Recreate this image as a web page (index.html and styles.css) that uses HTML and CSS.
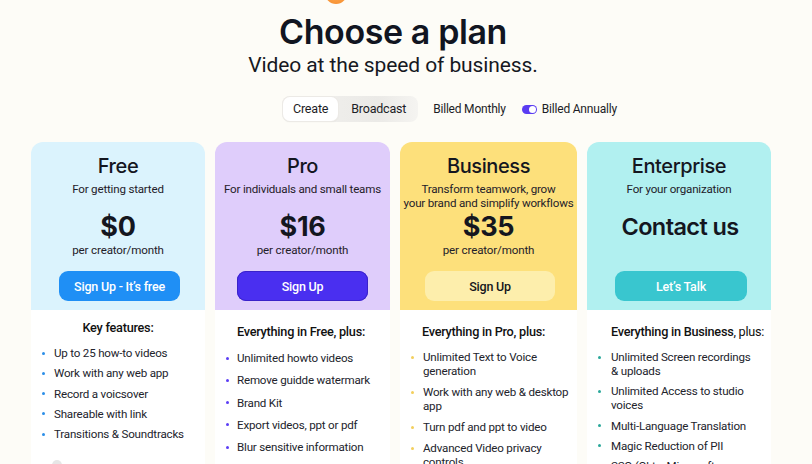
FILE: index.html
```html
<!DOCTYPE html>
<html lang="en">
<head>
<meta charset="utf-8">
<title>Choose a plan</title>
<link rel="stylesheet" href="styles.css">
</head>
<body>
<div class="page">
  <div class="peek"></div>
  <header class="hero">
    <h1 class="hero-title">Choose a plan</h1>
    <p class="hero-sub">Video at the speed of business.</p>
  </header>
  <div class="controls">
    <div class="seg">
      <span class="seg-item seg-on">Create</span>
      <span class="seg-item">Broadcast</span>
    </div>
    <span class="bill">Billed Monthly</span>
    <span class="switch"><span class="knob"></span></span>
    <span class="bill bill-on">Billed Annually</span>
  </div>

  <div class="plans">
    <section class="card card-free">
      <div class="card-top">
        <h2 class="plan-name">Free</h2>
        <p class="plan-desc">For getting started</p>
        <div class="price">$0</div>
        <div class="per">per creator/month</div>
        <button class="cta">Sign Up - It’s free</button>
      </div>
      <div class="card-body">
        <h3 class="feat-head center">Key features:</h3>
        <ul class="feats">
          <li>Up to 25 how-to videos</li>
          <li>Work with any web app</li>
          <li>Record a voicsover</li>
          <li>Shareable with link</li>
          <li>Transitions &amp; Soundtracks</li>
        </ul>
        <span class="more-dot"></span>
      </div>
    </section>

    <section class="card card-pro">
      <div class="card-top">
        <h2 class="plan-name">Pro</h2>
        <p class="plan-desc">For individuals and small teams</p>
        <div class="price">$16</div>
        <div class="per">per creator/month</div>
        <button class="cta">Sign Up</button>
      </div>
      <div class="card-body">
        <h3 class="feat-head">Everything in Free, plus:</h3>
        <ul class="feats">
          <li>Unlimited howto videos</li>
          <li>Remove guidde watermark</li>
          <li>Brand Kit</li>
          <li>Export videos, ppt or pdf</li>
          <li>Blur sensitive information</li>
        </ul>
      </div>
    </section>

    <section class="card card-biz">
      <div class="card-top">
        <h2 class="plan-name">Business</h2>
        <p class="plan-desc">Transform teamwork, grow<br>your brand and simplify workflows</p>
        <div class="price">$35</div>
        <div class="per">per creator/month</div>
        <button class="cta">Sign Up</button>
      </div>
      <div class="card-body">
        <h3 class="feat-head">Everything in Pro, plus:</h3>
        <ul class="feats">
          <li>Unlimited Text to Voice generation</li>
          <li>Work with any web &amp; desktop app</li>
          <li>Turn pdf and ppt to video</li>
          <li>Advanced Video privacy controls</li>
        </ul>
      </div>
    </section>

    <section class="card card-ent">
      <div class="card-top">
        <h2 class="plan-name">Enterprise</h2>
        <p class="plan-desc">For your organization</p>
        <div class="price price-contact">Contact us</div>
        <div class="per">&nbsp;</div>
        <button class="cta">Let’s Talk</button>
      </div>
      <div class="card-body">
        <h3 class="feat-head"><b>Everything in Business</b>, plus:</h3>
        <ul class="feats">
          <li>Unlimited Screen recordings &amp; uploads</li>
          <li>Unlimited Access to studio voices</li>
          <li>Multi-Language Translation</li>
          <li>Magic Reduction of PII</li>
          <li>SSO (Okta, Microsoft, Google)</li>
        </ul>
      </div>
    </section>
  </div>
</div>
</body>
</html>
```

FILE: styles.css
```css
* { box-sizing: border-box; }
html, body { margin: 0; padding: 0; }
body {
  background: #fdfcf7;
  font-family: Roboto, "Noto Sans", sans-serif;
  color: #14161f;
  overflow: hidden;
}
.page { width: 812px; height: 464px; overflow: hidden; }

.peek {
  width: 22px; height: 22px; border-radius: 50%;
  background: radial-gradient(circle at 50% 40%, #ffb25a, #f58a2c);
  margin: -18px 0 0 325px;
}

.hero { text-align: center; padding-right: 26px; }
.hero-title {
  margin: 8px 0 0;
  font-family: Inter, Roboto, sans-serif;
  font-size: 34px; line-height: 40px; font-weight: 600;
  letter-spacing: -0.4px;
  color: #111521;
}
.hero-sub {
  margin: 0;
  font-size: 21px; line-height: 26px; font-weight: 400;
  letter-spacing: -0.1px;
  color: #161822;
}

.controls {
  display: flex; align-items: center;
  margin-top: 18px; padding-left: 282px;
  font-size: 12px; letter-spacing: -0.2px; color: #1c1d26;
}
.seg {
  display: flex; align-items: center;
  height: 26px; padding: 1px;
  border-radius: 8px;
  background: linear-gradient(90deg, #f3f2ef, #ebeae7 70%, #f5f4f1);
}
.seg-item { padding: 0 11px 0 13px; line-height: 24px; font-size: 12.5px; }
.seg-on {
  background: #fff; border-radius: 7px; padding: 0 10px;
  box-shadow: 0 0 0 1px #eceae6, 0 1px 2px rgba(0,0,0,.06);
}
.bill { margin-left: 15px; }
.switch {
  margin-left: 16px; width: 15px; height: 9px; border-radius: 5px;
  background: #5a3cf2; display: flex; align-items: center; justify-content: flex-end;
  padding-right: 1px;
}
.knob { width: 7px; height: 7px; border-radius: 50%; background: #fff; }
.bill-on { margin-left: 5px; }

.plans {
  display: grid;
  grid-template-columns: 174px 175px 177px 184px;
  column-gap: 10px;
  margin: 20px 0 0 31px;
}
.card { display: flex; flex-direction: column; }
.card-top {
  height: 168px;
  border-radius: 12px 12px 0 0;
  padding-top: 12px;
  text-align: center;
  display: flex; flex-direction: column; align-items: center;
}
.card-free .card-top { background: #dbf3fd; }
.card-pro .card-top { background: #dfcdfb; }
.card-biz .card-top { background: #fde07b; }
.card-ent .card-top { background: #b1f0f0; }

.plan-name {
  margin: 0;
  font-family: Inter, Roboto, sans-serif;
  font-size: 20px; line-height: 24px; font-weight: 500;
  letter-spacing: -0.4px;
}
.plan-desc {
  margin: 4px 0 0; height: 28px;
  font-size: 11.6px; line-height: 14px; letter-spacing: -0.2px;
  color: #1f2029;
}
.card-biz .plan-desc { white-space: nowrap; }
.price {
  margin-top: 1px;
  font-family: Inter, Roboto, sans-serif;
  font-size: 27px; line-height: 32px; font-weight: 700;
  letter-spacing: -0.3px;
}
.price-contact { font-size: 23.5px; font-weight: 600; letter-spacing: -0.6px; margin-left: 2px; }
.per { font-size: 11.6px; line-height: 14px; letter-spacing: -0.15px; color: #1f2029; }
.cta {
  margin-top: 14px; height: 30px;
  border: 0; border-radius: 9px;
  font-family: inherit; font-size: 12.5px; font-weight: 500;
  letter-spacing: -0.2px;
  color: #fff;
}
.card-free .cta { width: 121px; background: #1f8ff5; margin-left: 3px; }
.card-pro .cta { width: 131px; background: #4a2ff0; box-shadow: inset 0 0 0 1px #3a22c9; }
.card-biz .cta { width: 130px; background: #fdeeac; color: #15161c; margin-left: 3px; }
.card-ent .cta { width: 132px; background: #39c6cf; margin-left: 4px; }

.card-body {
  flex: 1;
  background: #fff;
  padding: 13px 0 0 12px;
  height: 200px;
  position: relative;
}
.card-free .card-body { padding-top: 9px; }
.feat-head {
  margin: 0 0 0 10px;
  font-size: 12.7px; line-height: 18px; font-weight: 500;
  letter-spacing: -0.25px; color: #111;
  white-space: nowrap;
}
.feat-head b { font-weight: 500; }
.card-ent .feat-head { font-weight: 400; margin-left: 12px; }
.feat-head.center { text-align: center; margin: 0; padding-right: 12px; }

.feats { list-style: none; margin: 9px 0 0; padding: 0; }
.feats li {
  position: relative;
  padding-left: 11px; padding-right: 4px;
  font-size: 11.6px; line-height: 14px; letter-spacing: -0.2px;
  color: #22232c;
  margin-bottom: 7px;
}
.feats li::before {
  content: ""; position: absolute; left: -1px; top: 5.5px;
  width: 3px; height: 3px; border-radius: 50%;
  background: var(--dot);
}
.card-free .feats { margin-top: 9px; }
.card-free .feats li { margin-bottom: 6.3px; }
.card-pro .feats { margin-top: 10px; }
.card-pro .feats li { margin-bottom: 8.3px; padding-left: 10px; }
.card-ent .feats li { padding-left: 12px; padding-right: 14px; margin-bottom: 6.3px; }
.card-free { --dot: #2b8ee8; }
.card-pro { --dot: #5b3df5; }
.card-biz { --dot: #f3cf5c; }
.card-ent { --dot: #2aa89a; }

.more-dot {
  position: absolute; left: 21px; top: 150px;
  width: 10px; height: 10px; border-radius: 50%;
  background: #e6e6e6;
}
```
